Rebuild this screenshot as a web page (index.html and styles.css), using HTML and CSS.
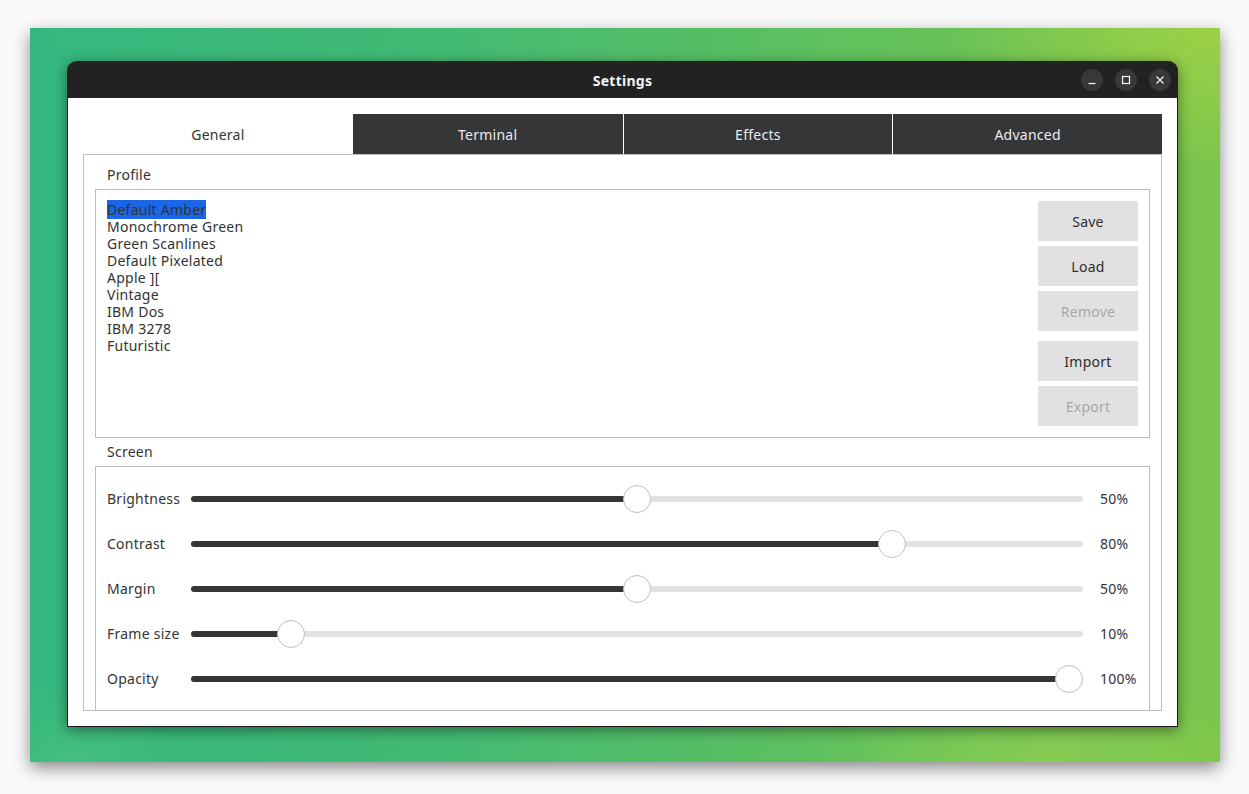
FILE: index.html
```html
<!DOCTYPE html>
<html lang="en">
<head>
    <meta charset="UTF-8">
    <meta name="viewport" content="width=device-width, initial-scale=1.0">
    <title>Settings</title>
    <link rel="stylesheet" href="styles.css">
</head>
<body>

<div class="desktop">
    <div class="window">
        <div class="titlebar">
            <span></span>
            <span class="title">Settings</span>
            <div class="controls">
                <button class="wbtn" title="Minimize">
                    <svg width="10" height="10" viewBox="0 0 10 10"><path d="M1.5 8.5h7" stroke="#eee" stroke-width="1.3" fill="none"/></svg>
                </button>
                <button class="wbtn" title="Maximize">
                    <svg width="10" height="10" viewBox="0 0 10 10"><rect x="1.5" y="1.5" width="7" height="7" stroke="#eee" stroke-width="1.3" fill="none"/></svg>
                </button>
                <button class="wbtn" title="Close">
                    <svg width="10" height="10" viewBox="0 0 10 10"><path d="M1.5 1.5l7 7M8.5 1.5l-7 7" stroke="#eee" stroke-width="1.3" fill="none"/></svg>
                </button>
            </div>
        </div>

        <div class="content">
            <div class="tabs">
                <div class="tab active">General</div>
                <div class="tab">Terminal</div>
                <div class="tab">Effects</div>
                <div class="tab">Advanced</div>
            </div>

            <div class="panel">
                <div class="group-title">Profile</div>
                <div class="group profile">
                    <ul class="profile-list">
                        <li><span class="selected">Default Amber</span></li>
                        <li>Monochrome Green</li>
                        <li>Green Scanlines</li>
                        <li>Default Pixelated</li>
                        <li>Apple ][</li>
                        <li>Vintage</li>
                        <li>IBM Dos</li>
                        <li>IBM 3278</li>
                        <li>Futuristic</li>
                    </ul>
                    <div class="actions">
                        <button class="btn">Save</button>
                        <button class="btn">Load</button>
                        <button class="btn" disabled>Remove</button>
                        <button class="btn btn-gap">Import</button>
                        <button class="btn" disabled>Export</button>
                    </div>
                </div>

                <div class="group-title">Screen</div>
                <div class="group screen">
                    <div class="row">
                        <span class="label">Brightness</span>
                        <div class="slider" style="--v: 0.5"><div class="fill"></div><div class="handle"></div></div>
                        <span class="value">50%</span>
                    </div>
                    <div class="row">
                        <span class="label">Contrast</span>
                        <div class="slider" style="--v: 0.795"><div class="fill"></div><div class="handle"></div></div>
                        <span class="value">80%</span>
                    </div>
                    <div class="row">
                        <span class="label">Margin</span>
                        <div class="slider" style="--v: 0.5"><div class="fill"></div><div class="handle"></div></div>
                        <span class="value">50%</span>
                    </div>
                    <div class="row">
                        <span class="label">Frame size</span>
                        <div class="slider" style="--v: 0.1"><div class="fill"></div><div class="handle"></div></div>
                        <span class="value">10%</span>
                    </div>
                    <div class="row">
                        <span class="label">Opacity</span>
                        <div class="slider" style="--v: 1"><div class="fill"></div><div class="handle"></div></div>
                        <span class="value">100%</span>
                    </div>
                </div>
            </div>
        </div>
    </div>
</div>

</body>
</html>
```

FILE: styles.css
```css
* {
    box-sizing: border-box;
}
body {
    margin: 0;
    padding-bottom: 32px;
    background-color: #fafafa;
    font-family: "Noto Sans", "Open Sans", sans-serif;
    font-size: 14px;
    letter-spacing: 0.25px;
    color: #333;
}
/* wallpaper */
.desktop {
    width: 1190px;
    height: 734px;
    margin: 28px 0 0 30px;
    padding: 33px 0 0 37px;
    background:
        radial-gradient(ellipse 260px 140px at 1190px 0px, rgba(160, 210, 70, 0.9), rgba(160, 210, 70, 0) 100%),
        radial-gradient(ellipse 220px 80px at 1010px 734px, rgba(150, 210, 80, 0.6), rgba(150, 210, 80, 0) 100%),
        radial-gradient(ellipse 120px 80px at 40px 734px, rgba(90, 200, 130, 0.4), rgba(90, 200, 130, 0) 100%),
        linear-gradient(90deg, #34b77f 0%, #43ba73 35%, #58bf63 60%, #6bc356 80%, #7cc64c 100%);
    box-shadow: 0 6px 16px rgba(0, 0, 0, 0.45);
}
.window {
    width: 1111px;
    height: 666px;
    background-color: #fff;
    border: 1px solid #1c1c1c;
    border-top: none;
    border-radius: 10px 10px 0 0;
    box-shadow: 0 3px 14px rgba(0, 0, 0, 0.45);
    display: flex;
    flex-direction: column;
}
.titlebar {
    height: 37px;
    background-color: #222;
    border-radius: 10px 10px 0 0;
    display: grid;
    grid-template-columns: 1fr auto 1fr;
    align-items: center;
    padding: 1px 7px 0 7px;
    margin: 0 -1px;
}
.title {
    color: #f2f2f2;
    font-weight: bold;
    font-size: 14px;
}
.controls {
    justify-self: end;
    display: flex;
    gap: 12px;
}
.wbtn {
    width: 22px;
    height: 22px;
    border-radius: 50%;
    border: none;
    padding: 0;
    background-color: #383838;
    display: flex;
    align-items: center;
    justify-content: center;
}
.content {
    flex: 1;
    padding: 16px 15px 15px 15px;
    display: flex;
    flex-direction: column;
}
/* tabs */
.tabs {
    display: grid;
    grid-template-columns: repeat(4, 1fr);
    height: 40px;
}
.tab {
    background-color: #353638;
    color: #ececec;
    display: flex;
    align-items: center;
    justify-content: center;
}
.tab + .tab {
    border-left: 1px solid #fff;
}
.tab.active {
    background-color: #fff;
    color: #333;
}
.tab.active + .tab {
    border-left: none;
}
.panel {
    height: 557px;
    border: 1px solid #bdbdbd;
    padding: 6px 11px 0 11px;
    overflow: hidden;
}
.group-title {
    height: 28px;
    line-height: 28px;
    padding-left: 12px;
}
.group {
    border: 1px solid #bdbdbd;
}
/* profile */
.profile {
    height: 249px;
    display: flex;
    justify-content: space-between;
    padding: 11px 11px 11px 11px;
}
.profile-list {
    list-style: none;
    margin: 0;
    padding: 0;
    line-height: 17px;
}
.selected {
    background-color: #1a66e8;
}
.actions {
    display: flex;
    flex-direction: column;
    gap: 5px;
}
.btn {
    width: 100px;
    height: 40px;
    border: none;
    background-color: #e1e1e1;
    font-family: inherit;
    font-size: 14px;
    letter-spacing: 0.25px;
    color: #2d2d2d;
    padding: 0;
}
.btn:disabled {
    color: #a8a8a8;
}
.btn-gap {
    margin-top: 5px;
}
/* sliders */
.screen {
    height: 260px;
    padding: 9px 12px 0 11px;
}
.row {
    height: 45px;
    display: grid;
    grid-template-columns: 84px 1fr 54px;
    align-items: center;
}
.value {
    padding-left: 17px;
    white-space: nowrap;
}
.slider {
    position: relative;
    height: 6px;
    border-radius: 3px;
    background-color: #e2e2e2;
}
.fill {
    height: 100%;
    border-radius: 3px;
    background-color: #353535;
    width: calc(14px + var(--v) * (100% - 28px));
}
.handle {
    position: absolute;
    top: -11px;
    left: calc(var(--v) * (100% - 28px));
    width: 28px;
    height: 28px;
    border-radius: 50%;
    background-color: #fff;
    border: 1px solid #bfbfbf;
}
```
